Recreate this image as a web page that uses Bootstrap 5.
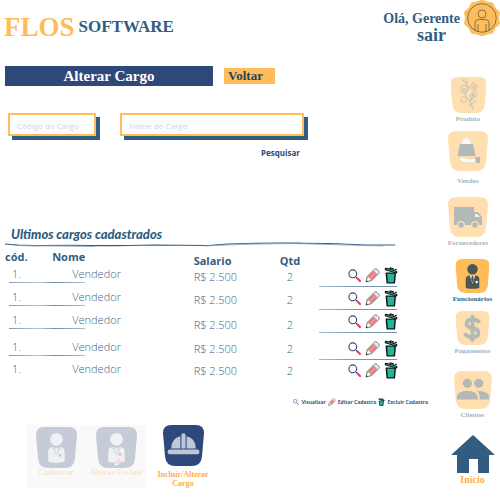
<!DOCTYPE html>
<html lang="pt-BR">
<head>
<meta charset="utf-8">
<meta name="viewport" content="width=device-width, initial-scale=1">
<title>Flos Software - Alterar Cargo</title>
<link rel="stylesheet" href="https://cdn.jsdelivr.net/npm/bootstrap@5.3.0/dist/css/bootstrap.min.css">
<style>
:root { --ink: #325d80; --navy: #2e4879; --gold: #ffbd59; }
body { font-family: "Open Sans", sans-serif; font-size: 11px; line-height: 14px; color: var(--ink); background: #fff; }
svg { display: block; flex: none; }
a { color: inherit; text-decoration: none; }
.serif { font-family: "Liberation Serif", serif; font-weight: 700; }
.topbar { height: 54px; }
.brand-a { font-size: 27px; line-height: 54px; color: var(--gold); }
.brand-b { font-size: 17px; line-height: 54px; }
.hello { font-size: 14px; line-height: 16px; padding-top: 11px; }
.exit { font-size: 18px; line-height: 16px; padding-right: 14px; }
.content { padding: 12px 0 8px 5px; }
.title-bar { background: var(--navy); font-size: 15px; line-height: 20px; width: 208px; }
.btn-back { background: var(--gold); color: #24425a; font-size: 13px; line-height: 16px; width: 51px; border: 0; padding: 0 8px 0 0; margin-left: 11px; }
.search { padding: 27px 3px 0; gap: 24px; }
.field { border: 2px solid var(--gold); box-shadow: 4px 4px #325d80; height: 23px; font-size: 8px; padding: 2px 7px 0; color: var(--ink); background: #fff; border-radius: 0; }
.field::placeholder { color: #cbd1df; opacity: 1; }
.code { width: 88px; }
.role { width: 184px; }
.btn-find { border: 0; background: none; padding: 0; color: var(--navy); font-size: 8px; line-height: 12px; font-weight: 700; margin: 11px 0 0 256px; }
.list-title { font-family: "Lato", sans-serif; font-style: italic; font-weight: 900; font-size: 13px; line-height: 14px; margin: 68px 0 0 6px; }
.roles { width: calc(100% - 38px); table-layout: fixed; }
.roles td, .roles th { padding: 0; vertical-align: top; }
.roles th { height: 16px; font-size: 11px; line-height: 12px; padding-top: 1px; }
.roles td { font-weight: 300; color: #3f6586; }
.roles tbody tr { height: 23px; background: linear-gradient(90deg, #7f9db5, #b5c6d3 40%, #6f90ab 60%, #a9bdcc) 4px 15px / 76px 1px no-repeat, linear-gradient(90deg, #a9bdcc, #7f9db5 40%, #6f90ab) right 1px top 19px / 78px 1px no-repeat; }
.roles tbody tr.tall { height: 27px; }
.roles tbody tr.short { height: 22px; }
.roles tbody tr:last-child { background: none; height: 20px; }
.roles td.num { padding-top: 3px; }
.roles tr.tall td.num { padding-top: 5px; }
.roles tr.short td.num, .roles tr:last-child td.num { padding-top: 2px; }
.roles td:nth-child(1) { padding-left: 7px; }
.roles td:nth-child(2) { padding-left: 20px; }
.roles th.low { padding-top: 5px; }
.act { border: 0; background: none; padding: 0; }
.legend { font-size: 5px; line-height: 8px; font-weight: 700; gap: 2px; padding: 16px 8px 0 0; }
.shortcuts { padding: 19px 0 0 22px; }
.faded-panel { background: #f9f9f9; gap: 6px; padding: 2px 2px 11px; }
.faded-panel > a { opacity: .25; width: 54px; }
.shortcuts .serif { font-size: 8px; line-height: 9px; color: #fdb04a; }
.current { width: 56px; margin-left: 10px; }
.side { width: 64px; flex: none; padding-top: 23px; font-size: 7px; line-height: 8px; }
.side a.dim { opacity: .47; }
.side a { display: flex; flex-direction: column; align-items: center; gap: 2px; }
.side a.near { margin-top: 12px; }
.shift { padding-left: 9px; }
.side .home { font-size: 10px; line-height: 10px; color: #fdb04a; }
</style>
<script src="https://cdn.jsdelivr.net/npm/bootstrap@5.3.0/dist/js/bootstrap.bundle.min.js"></script>
</head>
<body>
<svg width="0" height="0" class="position-absolute" aria-hidden="true">
  <symbol id="tile" viewBox="0 0 40 40"><path d="M8 0H32Q40 0 40 8L38 31Q37 40 28 40H12Q3 40 2 31L0 8Q0 0 8 0Z" fill="currentColor"/></symbol>
  <symbol id="glass" viewBox="0 0 13 13"><circle cx="4.8" cy="4.8" r="3.9" fill="#fff" stroke="#2e4879" stroke-width="1.1"/><path d="M7.7 7.7L9 9" stroke="#2e4879"/><path d="M9 9L12 12" stroke="#f0365a" stroke-width="2" stroke-linecap="round"/></symbol>
  <symbol id="pencil" viewBox="0 0 15 15"><path d="M1 14L2.4 8.300L9.300 1.400Q10.500.3 12 1.400L13.700 3.100Q14.700 4.400 13.600 5.600L6.700 12.500Z" fill="#fff" stroke="#444b55" stroke-width=".8"/><path d="M2.900 8.800L9 2.800L12.200 6L6.200 12Z" fill="#ea6a70"/><path d="M4 9.900L10 3.900L11 4.900L5 10.900Z" fill="#f6a5a5"/><path d="M9.200 2.600L10.400 1.500L13.400 4.600L12.300 5.700Z" fill="#e5e7ea"/><path d="M1 14L1.500 12L2.900 13.400Z" fill="#333"/></symbol>
  <symbol id="bin" viewBox="0 0 14 18"><path d="M2 6.500H11.500L10.600 16.800H3Z" fill="#1fb796" stroke="#111" stroke-width="1.500" stroke-linejoin="round"/><path d="M1.800 2.300L12.300 5.300" stroke="#111" stroke-width="3" stroke-linecap="round"/><path d="M2 2.300L12.300 5.300" stroke="#1fb796" stroke-width="1"/><path d="M5.500 2.300L6.200.9L9.300 1.800L9.200 3.300M10.800 3.200L13 2" fill="none" stroke="#111" stroke-width="1.200"/></symbol>
  <symbol id="worker" viewBox="0 0 40 40"><circle cx="20" cy="12" r="6.200"/><path d="M12 34V24Q12 19.500 17 19.500L20 25L23 19.500Q28 19.500 28 24V34Q20 36 12 34Z"/><path d="M19 20H21L21.500 24L20 26L18.500 24Z"/></symbol>
</svg>

<header class="topbar d-flex justify-content-between">
  <a href="#" class="serif d-flex ps-1 gap-1"><span class="brand-a">FLOS</span><span class="brand-b">SOFTWARE</span></a>
  <div class="d-flex gap-1 serif">
    <div class="text-end"><div class="hello">Olá, Gerente</div><a href="#" class="exit d-block">sair</a></div>
    <svg width="36" height="36" viewBox="0 0 36 36"><path d="M18 0L23 2L28.500 3L31 8L35.500 12L34.500 18L35.500 24L31 28L28.500 33L23 34L18 36L13 34L7.500 33L5 28L.5 24L1.500 18L.5 12L5 8L7.500 3L13 2Z" fill="#ffbd59" stroke="#ffbd59" stroke-linejoin="round"/><g fill="none" stroke="#66604c" stroke-width=".8"><circle cx="18" cy="18" r="14.300"/><circle cx="18" cy="14" r="4"/><path d="M11 31V23Q11 19.500 14.500 19.500H21.500Q25 19.500 25 23V31M14 32V24M22 32V24"/></g></svg>
  </div>
</header>

<div class="d-flex">
  <main class="content flex-fill">
    <div class="d-flex align-items-center">
      <h1 class="title-bar serif text-white text-center mb-0">Alterar Cargo</h1>
      <button type="button" class="btn-back serif">Voltar</button>
    </div>
    <form>
      <div class="search d-flex">
        <input class="field code" type="text" placeholder="Código do Cargo" aria-label="Código do Cargo">
        <input class="field role" type="text" placeholder="Nome do Cargo" aria-label="Nome do Cargo">
      </div>
      <button type="button" class="btn-find d-block">Pesquisar</button>
    </form>

    <h2 class="list-title mb-0">Ultimos cargos cadastrados</h2>
    <svg width="91%" height="9" viewBox="0 0 394 9" preserveAspectRatio="none"><path d="M0 3Q18 5 40 4.500T85 4.500T150 4L205 4.500Q225 2 275 2Q330 2 360 4L392 4" fill="none" stroke="#325d80" stroke-width="1.200"/><path d="M10 4.500L90 5.500M200 5Q235 3 290 2.500L380 5" fill="none" stroke="#7f9db5" stroke-width=".8"/></svg>
    <table class="roles">
      <colgroup><col style="width:12%"><col style="width:36%"><col style="width:20%"><col style="width:9%"><col style="width:23%"></colgroup>
      <thead><tr><th>cód.</th><th>Nome</th><th class="low">Salario</th><th class="low text-center">Qtd</th><th></th></tr></thead>
      <tbody>
        <tr><td>1.</td><td>Vendedor</td><td class="num">R$ 2.500</td><td class="num text-center">2</td><td><div class="d-flex justify-content-end align-items-center gap-1"><button class="act" aria-label="Visualizar"><svg width="13" height="13"><use href="#glass"/></svg></button><button class="act" aria-label="Editar"><svg width="15" height="15"><use href="#pencil"/></svg></button><button class="act" aria-label="Excluir"><svg width="14" height="17"><use href="#bin"/></svg></button></div></td></tr>
        <tr><td>1.</td><td>Vendedor</td><td class="num">R$ 2.500</td><td class="num text-center">2</td><td><div class="d-flex justify-content-end align-items-center gap-1"><button class="act" aria-label="Visualizar"><svg width="13" height="13"><use href="#glass"/></svg></button><button class="act" aria-label="Editar"><svg width="15" height="15"><use href="#pencil"/></svg></button><button class="act" aria-label="Excluir"><svg width="14" height="17"><use href="#bin"/></svg></button></div></td></tr>
        <tr class="tall"><td>1.</td><td>Vendedor</td><td class="num">R$ 2.500</td><td class="num text-center">2</td><td><div class="d-flex justify-content-end align-items-center gap-1"><button class="act" aria-label="Visualizar"><svg width="13" height="13"><use href="#glass"/></svg></button><button class="act" aria-label="Editar"><svg width="15" height="15"><use href="#pencil"/></svg></button><button class="act" aria-label="Excluir"><svg width="14" height="17"><use href="#bin"/></svg></button></div></td></tr>
        <tr class="short"><td>1.</td><td>Vendedor</td><td class="num">R$ 2.500</td><td class="num text-center">2</td><td><div class="d-flex justify-content-end align-items-center gap-1"><button class="act" aria-label="Visualizar"><svg width="13" height="13"><use href="#glass"/></svg></button><button class="act" aria-label="Editar"><svg width="15" height="15"><use href="#pencil"/></svg></button><button class="act" aria-label="Excluir"><svg width="14" height="17"><use href="#bin"/></svg></button></div></td></tr>
        <tr><td>1.</td><td>Vendedor</td><td class="num">R$ 2.500</td><td class="num text-center">2</td><td><div class="d-flex justify-content-end align-items-center gap-1"><button class="act" aria-label="Visualizar"><svg width="13" height="13"><use href="#glass"/></svg></button><button class="act" aria-label="Editar"><svg width="15" height="15"><use href="#pencil"/></svg></button><button class="act" aria-label="Excluir"><svg width="14" height="17"><use href="#bin"/></svg></button></div></td></tr>
      </tbody>
    </table>
    <div class="legend d-flex justify-content-end align-items-center">
      <svg width="6" height="6"><use href="#glass"/></svg><span>Visualizar</span>
      <svg width="8" height="8"><use href="#pencil"/></svg><span>Editar Cadastro</span>
      <svg width="7" height="8"><use href="#bin"/></svg><span>Excluir Cadastro</span>
    </div>

    <nav class="shortcuts d-flex align-items-start" aria-label="Funcionários">
      <div class="faded-panel d-flex serif">
        <a href="#" class="d-flex flex-column align-items-center"><svg width="43" height="41" viewBox="0 0 40 40"><use href="#tile" color="#2e4879"/><use href="#worker" fill="#d5dbe6"/><path d="M16 20L20 27L24 20" fill="none" stroke="#2e4879" stroke-width=".8"/><circle cx="23.500" cy="27.500" r="1.500" fill="#2e4879"/></svg>Cadastrar</a>
        <a href="#" class="d-flex flex-column align-items-center"><svg width="43" height="41" viewBox="0 0 40 40"><use href="#tile" color="#2e4879"/><use href="#worker" fill="#d5dbe6"/><path d="M16 20L20 27L24 20" fill="none" stroke="#2e4879" stroke-width=".8"/><circle cx="23.500" cy="26.500" r="1.500" fill="#2e4879"/><use href="#pencil" x="17" y="29" width="10" height="10"/></svg>Alterar/Excluir</a>
      </div>
      <a href="#" class="current serif d-flex flex-column align-items-center text-center"><svg class="mb-1" width="43" height="41" viewBox="0 0 40 40"><use href="#tile" color="#2e4879"/><path d="M8 23Q8 13 17 11V23ZM32 23Q32 13 23 11V23ZM18 9Q20 7 22 9V23H18Z" fill="#bfc8d8"/><rect x="4.500" y="24" width="31" height="4.500" rx="2" fill="#bfc8d8"/></svg>Incluir/Alterar Cargo</a>
    </nav>
  </main>

  <nav class="side serif" aria-label="Menu principal">
    <a href="#" class="dim"><svg width="37" height="36" viewBox="0 0 40 40"><use href="#tile" color="#ffbd59"/><g fill="none" stroke="#5d6b68" stroke-width=".8"><path d="M14 3Q15 7 19 6Q17 2 14 3ZM18 7L20 12L16 20L22 27L25 36M26 17L22 27M25 32L20 31M12 13Q10 9 14 10Q16 7 18 11Q22 11 18 15Q18 19 14 17Q10 18 12 13ZM24 8Q26 4 28 9Q32 10 28 13Q27 17 24 13Q20 12 24 8ZM24 18Q29 14 29 19Q31 23 26 22Q22 24 22 20ZM13 23Q16 19 17 24Q20 27 15 28Q11 29 12 25ZM22 25Q27 23 27 28Q24 31 21 28Z"/><circle cx="15" cy="14" r="1.500"/><circle cx="26" cy="11" r="1.500"/><circle cx="26" cy="20" r="1"/></g></svg>Produto</a>
    <a href="#" class="dim mt-2"><svg width="42" height="40" viewBox="0 0 40 40"><use href="#tile" color="#ffbd59"/><path d="M14 13Q14 7 18.500 7T23 13" fill="#fff3df" stroke="#ddd7cb"/><path d="M12 13H25L27.500 25H9.500Z" fill="#5d6b68"/><path d="M10 28Q14 25 18 27L22 28L28 27V31Q18 34 10 28Z" fill="#fff3df" stroke="#9b8c72" stroke-width=".5"/><path d="M27 26H32V32H28Z" fill="#5d6b68"/></svg><span class="pt-1">Vendas</span></a>
    <a href="#" class="dim near"><svg width="42" height="40" viewBox="0 0 40 40"><use href="#tile" color="#ffbd59"/><path d="M6 10H26V15H30L34 20V28H31A4 4 0 0 0 23 28H17A4 4 0 0 0 9 28H6Z" fill="#5d6b68"/><circle cx="13" cy="28" r="2.700" fill="#5d6b68"/><circle cx="27" cy="28" r="2.700" fill="#5d6b68"/><path d="M27 17H29.500L32 20H27Z" fill="#ffe0ae"/></svg>Fornecedores</a>
    <div class="shift">
      <a href="#" class="near"><svg width="35" height="34" viewBox="0 0 40 40"><use href="#tile" color="#ffbd59"/><use href="#worker" fill="#4b5752"/><path d="M17 20L20 29L23 20" fill="#fff"/><path d="M19 20H21L21.500 24L20 28L18.500 24Z" fill="#4b5752"/><circle cx="25" cy="27" r="1.400" fill="#fff"/></svg>Funcionários</a>
      <a href="#" class="dim mt-2"><svg width="35" height="34" viewBox="0 0 40 40"><use href="#tile" color="#ffbd59"/><path d="M28 14Q26 10 20 10Q13 10 13 15Q13 19 20 20Q27 21 27 26Q27 31 20 31Q13 31 11 26M20 5V36" fill="none" stroke="#5d6b68" stroke-width="4.500"/></svg>Pagamentos</a>
      <a href="#" class="dim mt-3"><svg width="38" height="38" viewBox="0 0 40 40"><use href="#tile" color="#ffbd59"/><g fill="#5d6b68"><circle cx="14" cy="13" r="4.800"/><circle cx="26" cy="13" r="4.800"/><path d="M3 30V27Q4 21 14 21T25 27V30ZM27 30V26Q27 23 24 21Q37 21 37 27V30Z"/></g></svg>Clientes</a>
      <a href="#" class="home mt-3"><svg width="44" height="38" viewBox="0 0 44 38"><path d="M22 0L44 20H38V38H27V24H18V38H6V20H0Z" fill="#325d80"/></svg>Início</a>
    </div>
  </nav>
</div>
</body>
</html>
